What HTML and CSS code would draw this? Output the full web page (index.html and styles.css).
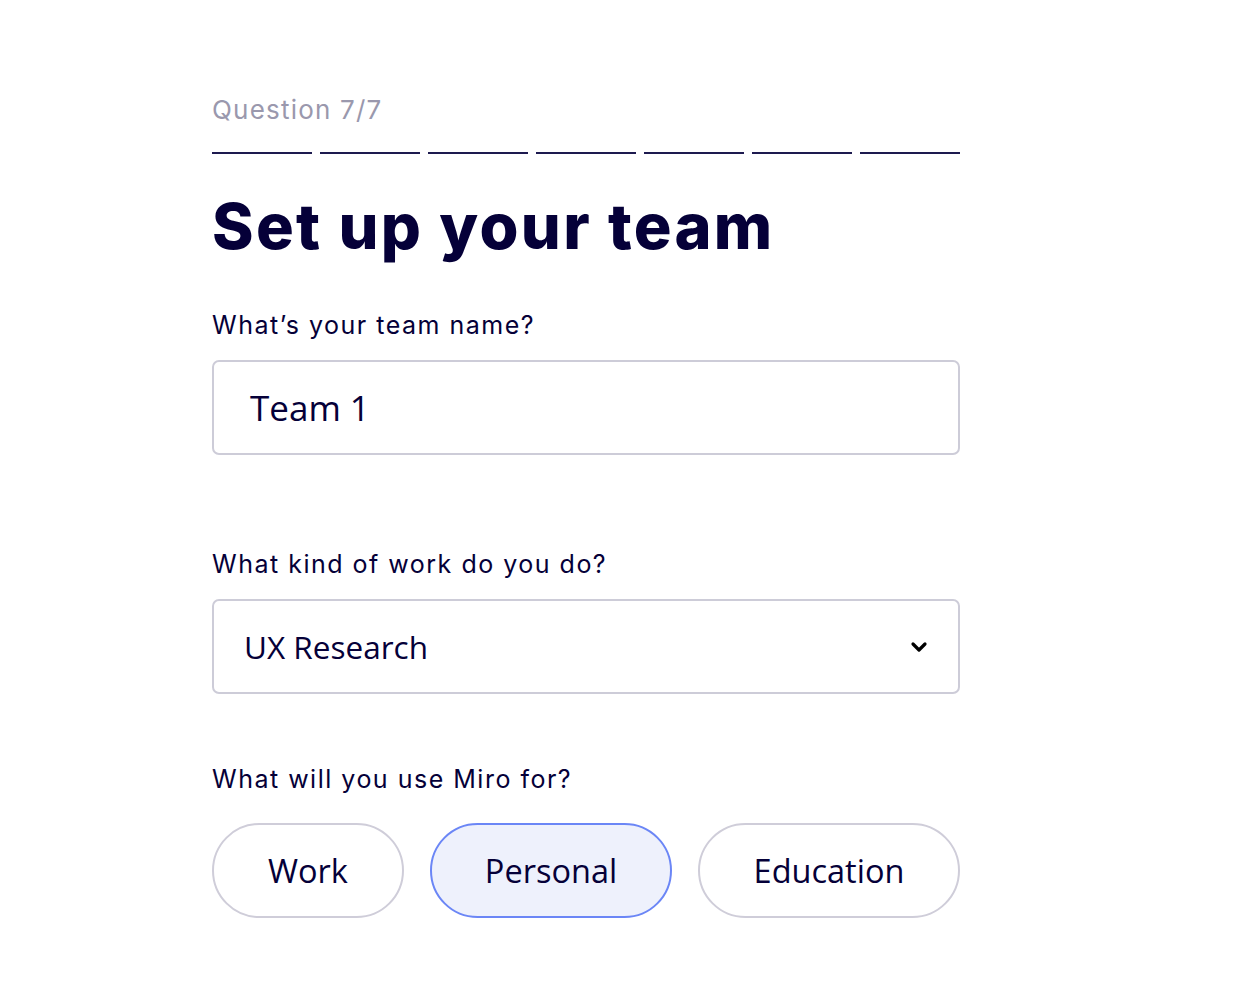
FILE: index.html
```html
<!DOCTYPE html>
<html lang="en">
<head>
<meta charset="utf-8">
<title>Set up your team</title>
<link rel="stylesheet" href="styles.css">
</head>
<body>
<main class="form">
  <div class="step">Question 7/7</div>
  <div class="progress">
    <span class="seg"></span><span class="seg"></span><span class="seg"></span><span class="seg"></span><span class="seg"></span><span class="seg"></span><span class="seg"></span>
  </div>
  <h1 class="title">Set up your team</h1>

  <label class="label label-first">What’s your team name?</label>
  <div class="field field-input">Team 1</div>

  <label class="label label-second">What kind of work do you do?</label>
  <div class="field field-select">
    <span>UX Research</span>
    <svg class="chevron" width="18" height="12" viewBox="0 0 18 12"><path d="M3 3 L9 9 L15 3" fill="none" stroke="#000" stroke-width="3.2" stroke-linecap="round" stroke-linejoin="round"/></svg>
  </div>

  <label class="label label-third">What will you use Miro for?</label>
  <div class="choices">
    <button class="pill">Work</button>
    <button class="pill pill-active">Personal</button>
    <button class="pill">Education</button>
  </div>
</main>
</body>
</html>
```
FILE: styles.css
```css
html, body {
  margin: 0;
  padding: 0;
  background: #ffffff;
}

.form {
  width: 748px;
  margin-left: 212px;
  padding-top: 92px;
  color: #050038;
  font-family: Inter, "Noto Sans", sans-serif;
}

.step {
  font-size: 26px;
  line-height: 36px;
  color: #9a98ad;
  letter-spacing: 1.2px;
}

.progress {
  display: flex;
  gap: 8px;
  margin-top: 24px;
}

.seg {
  flex: 1;
  height: 2px;
  background: #1d1a4f;
}

.title {
  margin: 32px 0 0;
  font-family: Inter, sans-serif;
  font-weight: 800;
  font-size: 63px;
  line-height: 80px;
  letter-spacing: 2.3px;
}

.label {
  display: block;
  font-size: 25px;
  line-height: 32px;
  letter-spacing: 1.5px;
}

.label-first { margin-top: 43px; }
.label-second { margin-top: 93px; }
.label-third { margin-top: 69px; }

.field {
  box-sizing: border-box;
  height: 95px;
  margin-top: 19px;
  border: 2px solid #cdccd8;
  border-radius: 7px;
  font-family: "Open Sans", sans-serif;
  display: flex;
  align-items: center;
}

.field-input {
  padding-left: 36px;
  font-size: 35px;
}

.field-select {
  padding: 0 30px 0 30px;
  font-size: 31.5px;
  justify-content: space-between;
}

.chevron {
  display: block;
}

.choices {
  display: grid;
  grid-template-columns: 192px 242px 1fr;
  gap: 26px;
  margin-top: 28px;
}

.pill {
  box-sizing: border-box;
  height: 95px;
  padding: 0;
  border: 2px solid #cfcdd9;
  border-radius: 48px;
  background: #ffffff;
  color: #050038;
  font-family: "Open Sans", sans-serif;
  font-size: 32.5px;
}

.pill-active {
  background: #eef1fc;
  border-color: #6b86f6;
}
```
